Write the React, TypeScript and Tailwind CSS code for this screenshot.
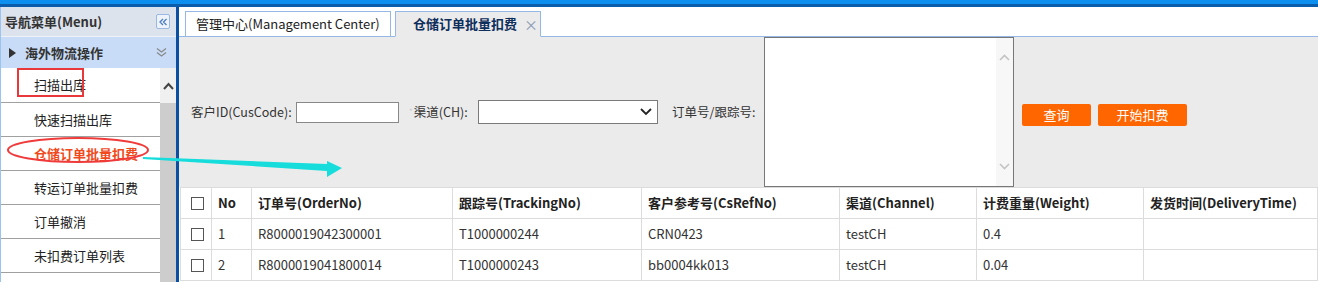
import React from "react";

const menuItems = ["扫描出库", "快速扫描出库", "仓储订单批量扣费", "转运订单批量扣费", "订单撤消", "未扣费订单列表", ""];

const columns = [
  { key: "no", title: "No" },
  { key: "order", title: "订单号(OrderNo)" },
  { key: "track", title: "跟踪号(TrackingNo)" },
  { key: "ref", title: "客户参考号(CsRefNo)" },
  { key: "ch", title: "渠道(Channel)" },
  { key: "weight", title: "计费重量(Weight)" },
  { key: "time", title: "发货时间(DeliveryTime)" },
];

const rows = [
  { no: "1", order: "R8000019042300001", track: "T1000000244", ref: "CRN0423", ch: "testCH", weight: "0.4", time: "" },
  { no: "2", order: "R8000019041800014", track: "T1000000243", ref: "bb0004kk013", ch: "testCH", weight: "0.04", time: "" },
];

const gridCols = "grid grid-cols-[32px_40px_201px_189px_198px_137px_167px_1fr]";

function Checkbox() {
  return <span className="block w-[13px] h-[13px] border border-[#555] bg-white" />;
}

function Sidebar() {
  return (
    <div className="w-[176px] shrink-0 flex flex-col border-l border-[#9cc2ee] bg-white">
      <div className="h-[30px] bg-[#dde3ed] flex items-center pl-[4px] pr-[6px] border-b border-[#eef2f8]">
        <span className="text-[13px] font-bold text-[#333]">导航菜单(Menu)</span>
        <span className="ml-auto w-[14px] h-[15px] border border-[#9ab8e2] rounded-[2px] bg-[#eef3fb] flex items-center justify-center">
          <svg width="10" height="10" viewBox="0 0 10 10" fill="none" stroke="#4a7cc4" strokeWidth="1.3">
            <path d="M5 2 L2 5 L5 8 M8.5 2 L5.5 5 L8.5 8" />
          </svg>
        </span>
      </div>
      <div className="h-[31px] bg-[#c8dcf7] flex items-center pl-[8px] pr-[9px]">
        <svg width="7" height="10" viewBox="0 0 7 10">
          <path d="M0 0 L7 5 L0 10 Z" fill="#333" />
        </svg>
        <span className="ml-[9px] text-[13px] font-bold text-[#333]">海外物流操作</span>
        <svg className="ml-auto" width="11" height="11" viewBox="0 0 11 11" fill="none" stroke="#888" strokeWidth="1.2">
          <path d="M1 1.5 L5.5 5 L10 1.5 M1 5.5 L5.5 9 L10 5.5" />
        </svg>
      </div>
      <div className="flex-1 flex overflow-hidden">
        <div className="w-[159px] flex flex-col">
          {menuItems.map((item, idx) => (
            <div
              key={idx}
              className={`h-[34px] shrink-0 flex items-center pl-[33px] text-[13px] border-b border-[#a0a0a0] ${
                idx === 0 ? "h-[35px]" : ""
              } ${item === "仓储订单批量扣费" ? "text-[#f04a1c] font-bold" : "text-[#222]"}`}
            >
              {item}
            </div>
          ))}
        </div>
        <div className="w-[16px] flex flex-col bg-[#cdcdcd]">
          <div className="h-[35px] bg-[#f0f0f0] flex items-center justify-center">
            <svg width="11" height="8" viewBox="0 0 11 8" fill="none" stroke="#444" strokeWidth="2">
              <path d="M1 7 L5.5 2 L10 7" />
            </svg>
          </div>
        </div>
      </div>
    </div>
  );
}

function Tabs() {
  return (
    <div className="h-[30px] bg-white border-b border-[#95b8e7] flex items-end pl-[6px] gap-[4px]">
      <div className="h-[26px] -mb-px w-[206px] border border-[#95b8e7] bg-white flex items-center pl-[10px] text-[13px] text-[#222] whitespace-nowrap">
        管理中心(Management Center)
      </div>
      <div className="h-[26px] -mb-px w-[146px] border border-[#95b8e7] border-b-[#ebebeb] bg-[#ebebeb] flex items-center pl-[17px] text-[13px] font-bold text-[#0e2e5c] whitespace-nowrap">
        仓储订单批量扣费
        <span className="ml-[7px] text-[14px] font-normal text-[#8a9bb5]">×</span>
      </div>
    </div>
  );
}

function Filters() {
  return (
    <div className="h-[150px] bg-[#ebebeb] flex items-center pl-[12px] text-[12.5px] text-[#333] whitespace-nowrap">
      <span className="w-[105px]">客户ID(CusCode):</span>
      <div className="w-[103px] h-[21px] bg-white border border-[#888]" />
      <span className="w-[79px] pl-[15px] flex items-center">
        <span className="text-[8px] text-[#c8c8c8] -ml-[5px] mr-[1px]">*</span>渠道(CH):
      </span>
      <div className="w-[180px] h-[24px] bg-white border border-[#7a7a7a] flex items-center justify-end pr-[5px]">
        <svg width="12" height="8" viewBox="0 0 12 8" fill="none" stroke="#222" strokeWidth="1.8">
          <path d="M1 1 L6 6 L11 1" />
        </svg>
      </div>
      <span className="w-[106px] pl-[14px]">订单号/跟踪号:</span>
      <div className="w-[250px] h-[150px] self-start bg-white border border-[#777] flex justify-end">
        <div className="w-[17px] h-full bg-[#f7f7f7] flex flex-col items-center justify-between py-[16px]">
          <svg width="11" height="7" viewBox="0 0 11 7" fill="none" stroke="#c4c4c4" strokeWidth="1.6">
            <path d="M1 6 L5.5 1.5 L10 6" />
          </svg>
          <svg width="11" height="7" viewBox="0 0 11 7" fill="none" stroke="#c4c4c4" strokeWidth="1.6">
            <path d="M1 1 L5.5 5.5 L10 1" />
          </svg>
        </div>
      </div>
      <button className="ml-[8px] mt-[5px] w-[69px] h-[22px] bg-[#ff6600] rounded-[2px] text-white text-[13px]">查询</button>
      <button className="ml-[7px] mt-[5px] w-[89px] h-[22px] bg-[#ff6600] rounded-[2px] text-white text-[13px]">开始扣费</button>
    </div>
  );
}

function Table() {
  return (
    <div className="ml-[1px] border-t border-[#dcdcdc] bg-white text-[13px]">
      <div className={`${gridCols} h-[31px] border-b border-[#dcdcdc]`}>
        <div className="border-r border-[#dcdcdc] border-l flex items-center pl-[10px]">
          <Checkbox />
        </div>
        {columns.map((c) => (
          <div key={c.key} className="border-r border-[#dcdcdc] flex items-center pl-[6px] font-bold text-[#222] whitespace-nowrap">
            {c.title}
          </div>
        ))}
      </div>
      {rows.map((r) => (
        <div key={r.no} className={`${gridCols} h-[31px] border-b border-[#dcdcdc]`}>
          <div className="border-r border-[#dcdcdc] border-l flex items-center pl-[10px]">
            <Checkbox />
          </div>
          {columns.map((c) => (
            <div key={c.key} className="border-r border-[#dcdcdc] flex items-center pl-[6px] text-[#333] whitespace-nowrap">
              {r[c.key as keyof typeof r]}
            </div>
          ))}
        </div>
      ))}
    </div>
  );
}

export default function App() {
  return (
    <div className="relative w-[1318px] h-[282px] overflow-hidden bg-white flex flex-col font-['Noto_Sans_CJK_SC','Noto_Sans',sans-serif]">
      <div className="h-[4px] bg-[#0d8ff0] shrink-0" />
      <div className="h-[3px] bg-[#0b5cab] shrink-0" />
      <div className="flex-1 flex min-h-0">
        <Sidebar />
        <div className="w-[3px] bg-[#0b4fa3] shrink-0" />
        <div className="flex-1 flex flex-col min-w-0">
          <Tabs />
          <Filters />
          <Table />
        </div>
      </div>

      {/* annotation marks drawn over the screenshot */}
      <svg className="absolute inset-0 pointer-events-none" width="1318" height="282">
        <rect x="18" y="69" width="65" height="27" fill="none" stroke="#e8383a" strokeWidth="2" />
        <ellipse cx="78" cy="150" rx="70" ry="12" fill="none" stroke="#f03b3b" strokeWidth="2" />
        <polygon points="143,157 327,164 327,161 342,168 327,177 327,171 143,159" fill="#16dcdc" />
      </svg>
    </div>
  );
}
